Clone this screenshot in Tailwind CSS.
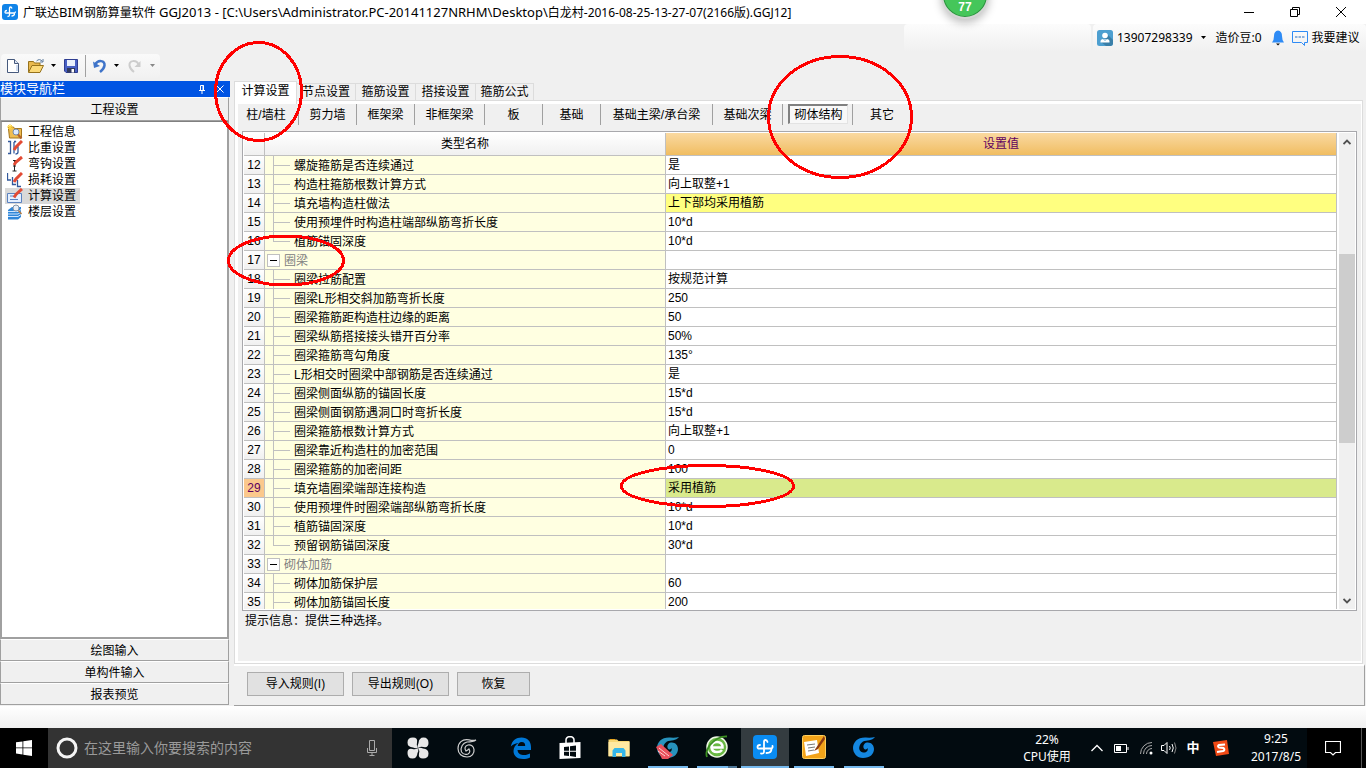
<!DOCTYPE html>
<html lang="zh-CN">
<head>
<meta charset="utf-8">
<title>广联达BIM钢筋算量软件 GGJ2013</title>
<script src="https://cdn.jsdelivr.net/npm/@tailwindcss/browser@4"></script>
</head>
<body class="relative flex h-screen flex-col overflow-hidden bg-[#f0f0f0] font-['Liberation_Sans','Noto_Sans_CJK_SC',sans-serif] text-xs text-black">

<!-- Title bar -->
<header class="flex h-6 shrink-0 items-center bg-white pr-0.5 pl-0.5 font-['Noto_Sans','Noto_Sans_CJK_SC',sans-serif]">
  <svg class="mr-[5px] size-4" viewBox="0 0 16 16"><rect width="16" height="16" rx="3" fill="#0f83e8"/><path d="M10 4.500Q9.500 3 8.500 3T7.500 4.500V11q0 1.500-2 1.500M5 6.500Q3 6.500 3 8t2 1h7q1.500 0 1.500-1.500M12.500 9.500q0 2.500-3 2.500" fill="none" stroke="#fff" stroke-width="1.300"/></svg>
  <h1 class="flex-1 text-[13px] leading-6 whitespace-nowrap"><span class="text-xs">广联达</span>BIM<span class="text-xs">钢筋算量软件</span> GGJ2013 - [C:\Users\Administrator.PC-20141127NRHM\Desktop\<span class="text-xs">白龙村-2016-08-25-13-27-07(2166版).GGJ12]</span></h1>
  <button aria-label="最小化" class="flex h-5 w-[46px] items-center justify-center"><svg class="size-3" viewBox="0 0 12 12"><path d="M1 6.500h10" stroke="#000"/></svg></button>
  <button aria-label="还原" class="flex h-5 w-[46px] items-center justify-center"><svg class="size-3" viewBox="0 0 12 12" fill="none" stroke="#000"><path d="M1.500 3.500h7v7h-7zM3.500 3.500v-2h7v7h-2"/></svg></button>
  <button aria-label="关闭" class="flex h-5 w-[46px] items-center justify-center"><svg class="size-3" viewBox="0 0 12 12" fill="none" stroke="#000"><path d="M1 1l10 10M11 1L1 11"/></svg></button>
</header>

<!-- Tool bars -->
<div class="flex h-[57px] shrink-0 items-start justify-between">
  <div class="mt-[30px] ml-px flex h-6 w-[159px] items-center rounded bg-linear-to-b from-[#fafafa] to-[#f1f1f1]">
    <button aria-label="新建" class="ml-1 w-4"><svg class="size-4" viewBox="0 0 16 16"><path d="M2.500 1.500h7l4 4v9h-11z" fill="#fff" stroke="#46597c"/><path d="M9.500 1.500v4h4" fill="#dbe6f5" stroke="#46597c"/><path d="M12 7v6" stroke="#cfdcf0" stroke-width="2"/></svg></button>
    <button aria-label="打开" class="ml-1.5 w-[18px]"><svg class="h-4 w-[18px]" viewBox="0 0 18 16"><path d="M1.500 14V3.500h5l1 1.500h5.500v3" fill="#e9b94f" stroke="#96721c"/><path d="M1.500 14.500L5 7.500h11.500l-3.500 7z" fill="#fbd978" stroke="#96721c"/><path d="M9.500 3q3-3 6 .5M16 1v3h-3" fill="none" stroke="#5c7b9c"/></svg></button>
    <svg class="ml-1.5 h-1 w-[5px]" viewBox="0 0 5 4"><path d="M0 0h5L2.500 3z"/></svg>
    <button aria-label="保存" class="ml-[7px] w-4"><svg class="size-4" viewBox="0 0 16 16"><path d="M1.500 1.500h13v13H3l-1.500-1.500z" fill="#4860c4" stroke="#2f3d91"/><path d="M4 2h8v6H4z" fill="#eaf0fc"/><path d="M4 10h8v4.500H4z" fill="#30385c"/><path d="M8.500 11h2.500v3.500H8.500z" fill="#fff"/></svg></button>
    <span class="ml-[6px] h-[22px] w-px bg-[#a0a0a0]"></span>
    <button aria-label="撤销" class="ml-1.5 w-4"><svg class="size-4" viewBox="0 0 16 16"><path d="M3 7C6 1 13 2.500 12.500 7.500Q12 11 8 14" fill="none" stroke="#3f74c9" stroke-width="2.500"/><path d="M1 3.500L2 10l6-2z" fill="#3f74c9"/></svg></button>
    <svg class="ml-1.5 h-1 w-[5px]" viewBox="0 0 5 4"><path d="M0 0h5L2.500 3z"/></svg>
    <button aria-label="重做" class="ml-[7px] w-4"><svg class="size-4" viewBox="0 0 16 16"><path d="M13 7C10 1 3 2.500 3.500 7.500Q4 11 8 14" fill="none" stroke="#cdcdcd" stroke-width="2"/><path d="M14.500 3v6h-6z" fill="#cdcdcd"/></svg></button>
    <svg class="ml-2 h-1 w-[5px]" viewBox="0 0 5 4"><path d="M0 0h5L2.500 3z" fill="#888"/></svg>
  </div>
  <div class="flex h-7 gap-0.5 font-['Noto_Sans','Noto_Sans_CJK_SC',sans-serif]">
    <div class="w-[187px] rounded bg-linear-to-b from-[#fcfcfc] to-[#f0f0f0]"></div>
    <div class="flex w-[273px] items-center rounded bg-linear-to-b from-[#fcfcfc] to-[#f0f0f0] pl-1">
      <svg class="size-4" viewBox="0 0 16 16"><rect width="16" height="16" rx="2.500" fill="#4d9fd0"/><path d="M11 5l5 5v4l-2 2H9l-5-4z" fill="#3a7fa8"/><circle cx="8" cy="5.500" r="2.800" fill="#fff"/><path d="M3.500 12.500V11q0-1.500 2.500-2h4q2.500.5 2.500 2v1.500z" fill="#fff"/><path d="M6.500 9L8 10.500 9.500 9" fill="none" stroke="#4d9fd0"/></svg>
      <button class="ml-1 flex items-center gap-2">13907298339<svg class="h-1 w-[5px]" viewBox="0 0 5 4"><path d="M0 0h5L2.500 3z"/></svg></button>
      <span class="ml-2.5 w-[48px] whitespace-nowrap">造价豆:0</span>
      <svg class="ml-2 h-4 w-3" viewBox="0 0 12 16"><path d="M6 .5q4 .5 4 5.500 0 4 2 6.500H0q2-2.500 2-6.500 0-5 4-5.500z" fill="#2e8bf5"/><path d="M4 13.500h4L6 15.500z" fill="#111"/></svg>
      <svg class="ml-2 size-4" viewBox="0 0 16 16" fill="none"><path d="M.5 1.500h15v11h-3v3l-3-3h-9z" stroke="#2e8bf5"/><path d="M3 7h2.500m1 0h2.500m1 0h2.500" stroke="#236dc4"/></svg>
      <a href="#" class="ml-1 whitespace-nowrap">我要建议</a>
    </div>
  </div>
</div>

<!-- Work area -->
<div class="flex min-h-0 flex-1">
  <aside class="flex w-[230px] shrink-0 flex-col pb-px">
    <div class="flex h-4 shrink-0 items-center bg-[#0054e3] text-white">
      <h2 class="flex-1 text-[13px] leading-4">模块导航栏</h2>
      <button aria-label="固定" class="mr-2.5"><svg class="h-2.5 w-2" viewBox="0 0 8 10" fill="none" stroke="#fff"><path d="M2.500 6V1.500h3V6M5 1v5M1 6.500h6M4 7v3"/></svg></button>
      <button aria-label="关闭导航栏" class="mr-1.5"><svg class="size-2" viewBox="0 0 8 8"><path d="M.5.500l7 7M7.500.500l-7 7" stroke="#fff"/></svg></button>
    </div>
    <button class="mr-px h-6 shrink-0 border border-[#a0a0a0] border-t-white pt-px">工程设置</button>
    <nav class="mr-px min-h-0 flex-1 border-2 border-t border-r-[#a0a0a0] border-l-[#a0a0a0] border-t-[#808080] border-b-[#a0a0a0] bg-white pt-0.5 pl-[3px]">
      <ul>
        <li><button class="flex h-4 w-[75px] items-center gap-[5px] pl-0.5"><svg class="size-4 shrink-0" viewBox="0 0 16 16"><path d="M1.500 5V3h5l1 1.500h7V14h-12z" fill="#efbd52" stroke="#a5761d"/><path d="M3 0v6M0 3h6M1 1l4 4M5 1L1 5" stroke="#ffd53a"/><circle cx="9" cy="8" r="3" fill="#dceaff" stroke="#7488a8"/><path d="M11 10.500l3.500 4" stroke="#b4632c" stroke-width="2"/></svg><span class="whitespace-nowrap leading-4">工程信息</span></button></li>
        <li><button class="flex h-4 w-[75px] items-center gap-[5px] pl-0.5"><svg class="size-4 shrink-0" viewBox="0 0 16 16"><path d="M1 1.500h2.500v12H1M7 1.500h2l-2 1v11M8 7h3v5q0 2-2.500 2" fill="none" stroke="#33599c" stroke-width="1.300"/><path d="M15 1L9 7l-2 3" fill="none" stroke="#e24a34" stroke-width="3"/></svg><span class="whitespace-nowrap leading-4">比重设置</span></button></li>
        <li><button class="flex h-4 w-[75px] items-center gap-[5px] pl-0.5"><svg class="size-4 shrink-0" viewBox="0 0 16 16"><path d="M6 4.500h3M7.500 5v10M5.500 15h4M6 10h3" stroke="#222"/><path d="M15 1L9 6l-2 3" fill="none" stroke="#e24a34" stroke-width="3"/></svg><span class="whitespace-nowrap leading-4">弯钩设置</span></button></li>
        <li><button class="flex h-4 w-[75px] items-center gap-[5px] pl-0.5"><svg class="size-4 shrink-0" viewBox="0 0 16 16"><path d="M.5 1v7H4M5.500 5v7.500H9M10.500 8v6.500H14" fill="none" stroke="#33599c" stroke-width="1.300"/><path d="M15 1L9 7l-2 3" fill="none" stroke="#e24a34" stroke-width="3"/></svg><span class="whitespace-nowrap leading-4">损耗设置</span></button></li>
        <li><button class="flex h-4 w-[75px] items-center gap-[5px] bg-[#d9d9d9] pl-0.5"><svg class="size-4 shrink-0" viewBox="0 0 16 16"><path d="M.5 5.500h14v9H.5z" fill="#e4efff" stroke="#5a82c0"/><path d="M3 8h4M3 11.500h8" stroke="#5a82c0"/><path d="M15 1L9 6.500l-2 3" fill="none" stroke="#e24a34" stroke-width="3"/></svg><span class="whitespace-nowrap leading-4">计算设置</span></button></li>
        <li><button class="flex h-4 w-[75px] items-center gap-[5px] pl-0.5"><svg class="size-4 shrink-0" viewBox="0 0 16 16"><path d="M1 6l4-3h9v10l-3 2.500H1z" fill="#2f86d8"/><path d="M1 7.500h10l3-2M1 10h10l3-2M1 12.500h10l3-2" fill="none" stroke="#cfe6ff"/><circle cx="9" cy="4" r="3" fill="#e6eef8" stroke="#8293a8"/><path d="M11.500 6.500l3 3.500" stroke="#b07a45" stroke-width="1.500"/></svg><span class="whitespace-nowrap leading-4">楼层设置</span></button></li>
      </ul>
    </nav>
    <button class="mr-px h-[22px] shrink-0 border border-[#a0a0a0] border-t-white pt-px">绘图输入</button>
    <button class="mr-px h-[22px] shrink-0 border border-[#a0a0a0] border-t-white pt-px">单构件输入</button>
    <button class="mr-px h-[22px] shrink-0 border border-[#a0a0a0] border-t-white pt-px">报表预览</button>
  </aside>

  <main class="ml-1 flex min-w-0 flex-1 flex-col">
    <div class="flex h-[19px] shrink-0 items-end">
      <button class="z-10 -mb-1 h-[23px] w-[63px] shrink-0 border border-b-0 border-[#dcdcdc] bg-white pb-1 leading-4">计算设置</button>
      <button class="h-[17px] w-[59px] border-t border-r border-[#dcdcdc] leading-4">节点设置</button>
      <button class="h-[17px] w-[60px] border-t border-r border-[#dcdcdc] leading-4">箍筋设置</button>
      <button class="h-[17px] w-[60px] border-t border-r border-[#dcdcdc] leading-4">搭接设置</button>
      <button class="h-[17px] w-[58px] border-t border-r border-[#dcdcdc] leading-4">箍筋公式</button>
    </div>
    <section class="mr-[3px] flex min-h-0 flex-1 flex-col border border-[#dcdcdc]">
      <div class="flex min-h-0 flex-1 flex-col border-t-3 border-r border-b-2 border-l-3 border-white">
        <div class="flex h-[21px] shrink-0 whitespace-nowrap leading-5">
          <button class="w-[61px] border-r border-[#a0a0a0] pr-1">柱/墙柱</button>
          <button class="w-[58px] border-r border-[#a0a0a0]">剪力墙</button>
          <button class="w-[58px] border-r border-[#a0a0a0]">框架梁</button>
          <button class="w-[70px] border-r border-[#a0a0a0]">非框架梁</button>
          <button class="w-[58px] border-r border-[#a0a0a0]">板</button>
          <button class="w-[58px] border-r border-[#a0a0a0]">基础</button>
          <button class="w-[112px] border-r border-[#a0a0a0]">基础主梁/承台梁</button>
          <button class="w-[70px] border-r border-[#a0a0a0]">基础次梁</button>
          <div class="w-[70px] border-r border-[#a0a0a0] pl-[5px]"><button class="h-5 w-[60px] border border-t-2 border-l-2 border-[#e3e3e3] border-t-[#808080] border-l-[#808080] bg-[#f8f8f8] pt-px leading-4">砌体结构</button></div>
          <button class="w-[58px]">其它</button>
        </div>
        <div class="mx-1 mt-1.5 flex min-h-0 flex-1 border border-[#a8a8ac] bg-white p-px">
          <div class="min-w-0 flex-1 overflow-hidden">
            <table class="w-full table-fixed border-separate border-spacing-0">
              <colgroup><col class="w-[21px]"><col class="w-[401px]"><col></colgroup>
              <thead>
                <tr class="h-[23px]">
                  <th class="border-r border-b border-[#c0c0c0] bg-linear-to-b from-white to-[#f0f0f0] p-0"></th>
                  <th class="border-r border-b border-[#c0c0c0] bg-linear-to-b from-white to-[#f0f0f0] p-0 font-normal">类型名称</th>
                  <th class="border-r border-b border-[#c0c0c0] bg-linear-to-b from-[#fad9a0] to-[#f0bd60] p-0 font-normal text-[#600060]">设置值</th>
                </tr>
              </thead>
              <tbody id="rows"></tbody>
            </table>
          </div>
          <div class="ml-0.5 flex w-4 shrink-0 flex-col items-center bg-[#f0f0f0]">
            <button aria-label="向上滚动" class="flex h-[17px] w-full shrink-0 items-center justify-center"><svg class="h-1.5 w-2" viewBox="0 0 8 6"><path d="M.5 5L4 1.500 7.500 5" fill="none" stroke="#505050" stroke-width="1.800"/></svg></button>
            <div class="flex w-full flex-1 flex-col">
              <div class="flex-[104]"></div><div class="flex-[190] bg-[#cdcdcd]"></div><div class="flex-[149]"></div>
            </div>
            <button aria-label="向下滚动" class="flex h-[17px] w-full shrink-0 items-center justify-center"><svg class="h-1.5 w-2" viewBox="0 0 8 6"><path d="M.5 1L4 4.500 7.500 1" fill="none" stroke="#505050" stroke-width="1.800"/></svg></button>
          </div>
        </div>
        <p class="h-[50px] shrink-0 pl-[7px] leading-5">提示信息：提供三种选择。</p>
      </div>
    </section>
    <div class="mr-px flex h-[42px] shrink-0 items-center gap-2 border-t-2 border-r border-b border-[#a0a0a0] border-t-white pl-[13px] pb-1">
      <button class="h-6 w-[97px] border border-[#adadad] bg-[#e1e1e1]">导入规则(I)</button>
      <button class="h-6 w-[97px] border border-[#adadad] bg-[#e1e1e1]">导出规则(O)</button>
      <button class="h-6 w-[73px] border border-[#adadad] bg-[#e1e1e1]">恢复</button>
    </div>
  </main>
</div>
<div class="h-[22px] shrink-0 bg-linear-to-b from-white to-[#f0f0f0]"></div>

<!-- Taskbar -->
<footer class="flex h-10 shrink-0 bg-[#020b10] font-['Noto_Sans','Noto_Sans_CJK_SC',sans-serif] text-white">
  <button aria-label="开始" class="flex w-12 shrink-0 items-center justify-center bg-black"><svg class="size-4" viewBox="0 0 16 16" fill="#fff"><path d="M0 2.300l6.500-.9v6.100H0zM7.300 1.300L16 0v7.500H7.300zM0 8.300h6.500v6.100L0 13.600zM7.300 8.300H16V16l-8.700-1.300z"/></svg></button>
  <div class="flex w-[344px] shrink-0 items-center bg-[#333] pl-2">
    <svg class="size-[22px]" viewBox="0 0 22 22"><circle cx="11" cy="11" r="9" fill="none" stroke="#f4f4f4" stroke-width="3"/></svg>
    <input aria-label="搜索" placeholder="在这里输入你要搜索的内容" class="ml-1.5 w-[270px] text-sm placeholder:text-[#9a9a9a]">
    <svg class="ml-3 h-4 w-3" viewBox="0 0 12 16" fill="none" stroke="#aaa"><path d="M3.500.500h5v10h-5zM1.500 8v4.500h9V8M6 13v2.500M3.500 15.500h5"/></svg>
  </div>
  <button aria-label="应用" class="ml-px flex w-[49px] items-center justify-center"><svg class="size-[22px]" viewBox="0 0 22 22" fill="#e8e8e8"><path d="M11 10.500Q9 12 6 10.500.500 10 .500 5.500.5.500 6 .5 11 .5 10 5.500 9 8.500 11 10.500z"/><path d="M11.500 11Q10 8.500 11.500 6 12 .500 16.500.5 21.500.5 21.500 6 21.500 11 16.500 10 13.500 9 11.500 11z"/><path d="M11 11.500Q13 10 16 11.500 21.500 12 21.500 16.500 21.500 21.500 16 21.500 11 21.500 12 16.500 13 13.500 11 11.500z"/><path d="M10.500 11Q12 13.500 10.500 16 10 21.500 5.500 21.500.5 21.500.5 16 .5 11 5.500 12 8.500 13 10.500 11z"/></svg></button>
  <button aria-label="广联达" class="flex w-[49px] items-center justify-center"><svg class="size-5" viewBox="0 0 20 20" fill="none" stroke="#d0d0d0" stroke-width="1.200"><path d="M19 2q-3 .8-7-.2C5 .5 1 5 1 10.500S5 19 10 19s7.500-4 7-7.500-3-5-6-4.500-4 4-2 6q2-1 3-2 2 3-1 5-4 1.500-6.500-2C3 9 6 5 10 4q6 0 9-2z"/></svg></button>
  <button aria-label="Edge" class="ml-[5px] flex w-[49px] items-center justify-center"><svg class="size-[22px]" viewBox="0 0 22 22"><path d="M.8 9.500C2 3.500 6 .5 11.500.5 17.500.5 21 4.500 21 10v3H7.500c.3 4 3.500 5 6.500 5 2.500 0 4.500-.6 6-1.500v4C18 21.500 15.500 22 13 22 7 22 3.500 18.500 3.500 14c0-3.500 2-6.500 5-8C5 6.500 2.500 7.500.8 9.500zM7.700 9h7.500c0-2.500-1-4-3.500-4-2.300 0-3.700 1.700-4 4z" fill="#0078d7"/></svg></button>
  <button aria-label="应用商店" class="flex w-[49px] items-center justify-center"><svg class="h-6 w-[22px]" viewBox="0 0 22 24"><path d="M7 7V4q0-3 4-3.500 4 .500 4 3.500v3" fill="none" stroke="#fff" stroke-width="1.500"/><path d="M.5 7L21.500 6v16L.5 23z" fill="#fff"/><path d="M5 11l5-.6v4.300H5zm6-.7l6-.8v5.200h-6zM5 15.700h5V20l-5-.5zm6 0h6v5.200l-6-.8z" fill="#020b10"/></svg></button>
  <button aria-label="文件资源管理器" class="flex w-[49px] items-center justify-center"><svg class="h-5 w-[22px]" viewBox="0 0 22 20"><path d="M.500 1.500h8.500l1.500 1.500h11v15.500H.500z" fill="#f8d775"/><path d="M.500 4h21v14H.5z" fill="#ffe9a2"/><path d="M2 1.500h5" stroke="#e8a51c"/><path d="M4.500 19v-6.500l2-2.500h9l2 2.500V19h-3.500v-4h-6v4z" fill="#35b6e9"/></svg></button>
  <button aria-label="广联达计价" class="flex w-[49px] flex-col items-center"><span class="flex flex-1 items-center"><svg class="size-6" viewBox="0 0 24 24"><path d="M23 2q-4 1-9 .5C6 2 1 7 1 13c0 5 4 10 10 10 7 0 11-4 11-9 0-4-3-7-7-6.500-3.500.5-5 5-2 7 1 0 2-.5 2.500-1.500 1 3-1.500 5-4.500 4.500C5 16 7 9 11 6.500 15 5 20 6 23 2z" fill="#2793bd"/><path d="M0 12l5-3 12 11-5 4H6z" fill="#e8505c"/><path d="M3 13l10 8M2 16l7 5" stroke="#ffd0d0"/></svg></span><span class="h-0.5 w-10 bg-[#76b9ed]"></span></button>
  <button aria-label="360浏览器" class="flex w-[49px] flex-col items-center"><span class="flex flex-1 items-center"><svg class="size-6" viewBox="0 0 24 24"><circle cx="12" cy="12" r="10" fill="#69b843" stroke="#eef8e4" stroke-width="1.500"/><path d="M6.500 12.500h11q0-5.500-5.500-5.500T6.500 12.500q.5 4.500 5.500 4.500 3.500 0 5-2" fill="none" stroke="#fff" stroke-width="2.500"/><path d="M2 22Q0 17 5 10 13 1 22 1.500" fill="none" stroke="#3b8f22" stroke-width="1.800"/></svg></span><span class="flex w-10"><span class="h-0.5 flex-1 bg-[#76b9ed]"></span><span class="h-0.5 w-[9px] bg-[#4d7696]"></span></span></button>
  <button aria-label="广联达钢筋算量" class="flex w-12 flex-col items-center bg-[#343c40]"><span class="flex flex-1 items-center"><svg class="size-6" viewBox="0 0 24 24"><rect width="24" height="24" rx="4" fill="#0a8cf2"/><path d="M14.500 7Q14 5 12.500 5T11 7v9.500q0 2.500-3 2M7 10q-2.500 0-2.500 2T7 13.500h10.500q2.500 0 2-2.500M18.500 14q0 4-5 4" fill="none" stroke="#fff" stroke-width="1.800" stroke-linecap="round"/></svg></span><span class="h-0.5 w-full bg-[#76b9ed]"></span></button>
  <button aria-label="笔记" class="flex w-[50px] flex-col items-center"><span class="flex flex-1 items-center"><svg class="size-6" viewBox="0 0 24 24"><rect x=".5" y=".5" width="23" height="23" rx="2" fill="#f2a319" stroke="#ffcf5c"/><path d="M2 7l13-2 2 13-13 3z" fill="#fff"/><path d="M5 10l8-1M6 13l7-1M6 16l6-1" stroke="#777"/><path d="M22 1L14 13l-2 3 4-2L23 4z" fill="#8e3b12"/></svg></span><span class="h-0.5 w-10 bg-[#76b9ed]"></span></button>
  <button aria-label="广联达土建" class="flex w-[49px] flex-col items-center"><span class="flex flex-1 items-center"><svg class="size-6" viewBox="0 0 24 24"><path d="M23 2q-4 1-9 .5C6 2 1 7 1 13c0 5 4 10 10 10 7 0 11-4 11-9 0-4-3-7-7-6.500-3.500.5-5 5-2 7 1 0 2-.5 2.500-1.500 1 3-1.500 5-4.500 4.500C5 16 7 9 11 6.500 15 5 20 6 23 2z" fill="#1487e0"/></svg></span><span class="h-0.5 w-10 bg-[#76b9ed]"></span></button>
  <div class="ml-auto flex shrink-0 items-center">
    <div class="w-[60px] text-center leading-[17px]">22%<br>CPU使用</div>
    <button aria-label="显示隐藏的图标" class="ml-[14px]"><svg class="h-2 w-3" viewBox="0 0 12 8"><path d="M.5 7L6 1.500 11.500 7" fill="none" stroke="#fff" stroke-width="1.300"/></svg></button>
    <svg class="ml-[11px] h-[9px] w-[15px]" viewBox="0 0 15 9"><path d="M.5.500h12v8H.5zM14 3v3" fill="none" stroke="#fff"/><path d="M2 2h5v5H2z" fill="#fff"/></svg>
    <svg class="ml-[11px] size-[13px]" viewBox="0 0 13 13" fill="none" stroke="#aaa"><path d="M.500 12A11.500 11.500 0 0 1 12 .500M3.500 12A8.500 8.500 0 0 1 12 3.500M6.500 12A5.500 5.500 0 0 1 12 6.500"/><circle cx="11" cy="11" r="1.500" fill="#fff" stroke="none"/></svg>
    <svg class="ml-2 h-3.5 w-4" viewBox="0 0 16 14" fill="none" stroke="#fff"><path d="M.5 4.500H3l3-3v11l-3-3H.5zM8.500 5q1.500 2 0 4M11 3q2.500 4 0 8"/><path d="M13.500 1.500q3 5.500 0 11" stroke="#888"/></svg>
    <button class="ml-2 w-4 text-[13px] font-bold">中</button>
    <svg class="ml-3 size-4" viewBox="0 0 16 16"><path d="M0 2L14 0l2 14-13 2z" fill="#f04a16"/><path d="M12 4.500L6 5Q4 6 6 7.500l4.500.5q2 2-.5 3L4 12" fill="none" stroke="#fff" stroke-width="2"/></svg>
    <time class="ml-4 w-[62px] text-center leading-[18px]">9:25<br>2017/8/5</time>
    <div class="flex h-10 items-center bg-black pl-[18px]">
      <button aria-label="操作中心"><svg class="size-4" viewBox="0 0 16 16"><path d="M.500 1.500h15v11h-5l-2.500 2.500-2.500-2.500h-5z" fill="none" stroke="#fff" stroke-width="1.200"/></svg></button>
      <span class="ml-5 h-10 w-px bg-[#555]"></span><span class="w-1"></span>
    </div>
  </div>
</footer>

<!-- Floating speed ball -->
<div class="absolute top-[-29px] left-[941px] flex size-12 items-end justify-center rounded-full border-2 border-[#d5d5d5] bg-[#45c65a] pb-0.5 text-xs leading-4 font-bold text-white shadow-[0_4px_8px_#00000040] ring-1 ring-[#2f8f40] ring-inset">77</div>

<!-- Red pen marks -->
<svg class="pointer-events-none absolute top-0 left-0 z-20 h-[768px] w-[1366px]" viewBox="0 0 1366 768" fill="none" stroke="#f00" stroke-width="3" shape-rendering="crispEdges">
  <ellipse cx="258.500" cy="91.500" rx="43" ry="49"/>
  <ellipse cx="840" cy="117" rx="71.500" ry="60.500"/>
  <ellipse cx="286" cy="260.500" rx="57.500" ry="24.500"/>
  <ellipse cx="707.500" cy="486" rx="86" ry="20.500"/>
</svg>

<script>
// [number, name, value, kind]; kind: "group" for a heading row, "last" for the end of a branch
const data = [
  [12, "螺旋箍筋是否连续通过", "是"],
  [13, "构造柱箍筋根数计算方式", "向上取整+1"],
  [14, "填充墙构造柱做法", "上下部均采用植筋"],
  [15, "使用预埋件时构造柱端部纵筋弯折长度", "10*d"],
  [16, "植筋锚固深度", "10*d", "last"],
  [17, "圈梁", "", "group"],
  [18, "圈梁拉筋配置", "按规范计算"],
  [19, "圈梁L形相交斜加筋弯折长度", "250"],
  [20, "圈梁箍筋距构造柱边缘的距离", "50"],
  [21, "圈梁纵筋搭接接头错开百分率", "50%"],
  [22, "圈梁箍筋弯勾角度", "135°"],
  [23, "L形相交时圈梁中部钢筋是否连续通过", "是"],
  [24, "圈梁侧面纵筋的锚固长度", "15*d"],
  [25, "圈梁侧面钢筋遇洞口时弯折长度", "15*d"],
  [26, "圈梁箍筋根数计算方式", "向上取整+1"],
  [27, "圈梁靠近构造柱的加密范围", "0"],
  [28, "圈梁箍筋的加密间距", "100"],
  [29, "填充墙圈梁端部连接构造", "采用植筋"],
  [30, "使用预埋件时圈梁端部纵筋弯折长度", "10*d"],
  [31, "植筋锚固深度", "10*d"],
  [32, "预留钢筋锚固深度", "30*d", "last"],
  [33, "砌体加筋", "", "group"],
  [34, "砌体加筋保护层", "60"],
  [35, "砌体加筋锚固长度", "200"]
];
const headBg = { 29: "bg-[#fbc88c] text-[#600060]" };
const valueBg = { 14: "bg-[#ffff80]", 29: "bg-[#d9ea8c]" };
document.getElementById("rows").innerHTML = data.map(([n, name, value, kind]) => {
  let cell;
  if (kind === "group") {
    cell = `<button aria-label="折叠" class="ml-0.5 flex size-[13px] items-center justify-center border border-[#c0c0c0] bg-white"><span class="h-px w-[7px] bg-black"></span></button><span class="ml-1 pt-0.5 text-[#808080]">${name}</span>`;
  } else if (kind === "last") {
    cell = `<span class="ml-2 h-[18px] w-[17px]"><span class="block h-[10px] border-b border-l border-[#c0c0c0]"></span></span><span class="ml-1 pt-0.5">${name}</span>`;
  } else {
    cell = `<span class="ml-2 h-[18px] w-[17px] border-l border-[#c0c0c0]"><span class="block h-[10px] border-b border-[#c0c0c0]"></span></span><span class="ml-1 pt-0.5">${name}</span>`;
  }
  return `<tr>
    <th class="h-[19px] border-r border-b border-[#c0c0c0] px-0 pt-px pb-0 font-normal leading-[17px] ${headBg[n] || "bg-linear-to-b from-white to-[#f0f0f0]"}">${n}</th>
    <td class="h-[19px] border-r border-b border-[#c0c0c0] bg-[#ffffe1] p-0"><div class="flex h-[18px] items-center whitespace-nowrap leading-[18px]">${cell}</div></td>
    <td class="h-[19px] border-r border-b border-[#c0c0c0] pt-px pr-0 pb-0 pl-0.5 leading-[17px] ${valueBg[n] || "bg-white"}">${value}</td>
  </tr>`;
}).join("");
</script>
</body>
</html>
